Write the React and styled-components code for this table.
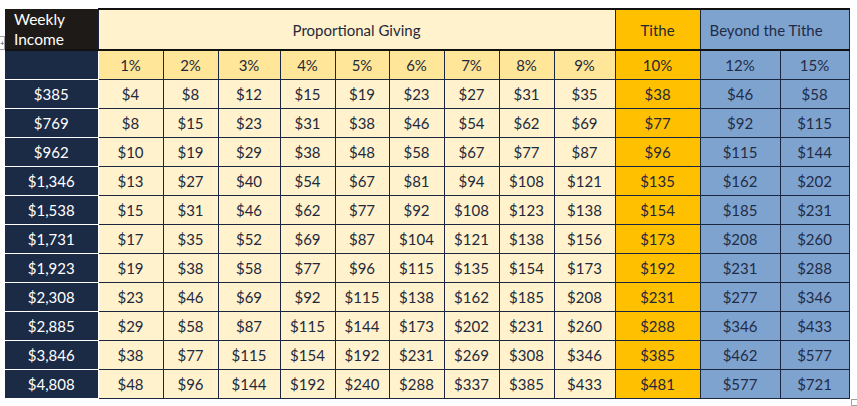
import styled, { createGlobalStyle } from "styled-components";

const GlobalStyle = createGlobalStyle`
  body {
    margin: 0;
    background: #ffffff;
    font-family: Lato, "Liberation Sans", sans-serif;
  }
`;

const Page = styled.div`
  position: relative;
  padding: 8px 0 0 5px;
  width: 857px;
  height: 406px;
  box-sizing: border-box;
`;

const Table = styled.table`
  border-collapse: collapse;
  table-layout: fixed;
  width: 844px;
  font-size: 15px;
  color: #1f293b;
`;

const HeadRow = styled.tr`
  height: 41px;
`;

const Row = styled.tr`
  height: 29px;
`;

const fills = {
  corner: "#1e1a17",
  income: "#1b2a45",
  cream: "#fff2cc",
  pct: "#ffe699",
  tithe: "#ffc000",
  blue: "#7fa3cf",
};

const Cell = styled.td`
  background: ${(p) => fills[p.$fill]};
  border: 1.5px solid #1b2740;
  text-align: ${(p) => (p.$left ? "left" : "center")};
  padding: 0 ${(p) => (p.$left ? "9px" : "0")};
  white-space: nowrap;
  ${(p) =>
    p.$fill === "income" &&
    `
    color: #ffffff;
    border-color: #ffffff;
    border-left: none;
  `}
  ${(p) =>
    p.$fill === "corner" &&
    `
    color: #ffffff;
    font-size: 15.5px;
    line-height: 20px;
    border: none;
    border-bottom: 2px solid #111111;
  `}
  ${(p) => p.$top && `border-top: 2px solid #111111; border-bottom: 2px solid #111111;`}
  ${(p) => p.$blueText && `color: #1f2c47;`}
`;

const MoveHandle = styled.div`
  position: absolute;
  left: 0;
  top: 36px;
  width: 4px;
  height: 12px;
  border: 1px solid #a0a0a0;
  border-left: none;
  background: #ffffff;
  font-size: 8px;
  line-height: 12px;
  color: #555;
  overflow: hidden;
`;

const ResizeHandle = styled.div`
  position: absolute;
  left: 851px;
  top: 399px;
  width: 7px;
  height: 7px;
  border: 1px solid #a0a0a0;
  box-sizing: border-box;
`;

const widths = [93, 65, 55, 62, 55, 54, 55, 55, 55, 61, 85, 80, 69];
const percents = [1, 2, 3, 4, 5, 6, 7, 8, 9, 10, 12, 15];

const rows = [
  ["$385", 4, 8, 12, 15, 19, 23, 27, 31, 35, 38, 46, 58],
  ["$769", 8, 15, 23, 31, 38, 46, 54, 62, 69, 77, 92, 115],
  ["$962", 10, 19, 29, 38, 48, 58, 67, 77, 87, 96, 115, 144],
  ["$1,346", 13, 27, 40, 54, 67, 81, 94, 108, 121, 135, 162, 202],
  ["$1,538", 15, 31, 46, 62, 77, 92, 108, 123, 138, 154, 185, 231],
  ["$1,731", 17, 35, 52, 69, 87, 104, 121, 138, 156, 173, 208, 260],
  ["$1,923", 19, 38, 58, 77, 96, 115, 135, 154, 173, 192, 231, 288],
  ["$2,308", 23, 46, 69, 92, 115, 138, 162, 185, 208, 231, 277, 346],
  ["$2,885", 29, 58, 87, 115, 144, 173, 202, 231, 260, 288, 346, 433],
  ["$3,846", 38, 77, 115, 154, 192, 231, 269, 308, 346, 385, 462, 577],
  ["$4,808", 48, 96, 144, 192, 240, 288, 337, 385, 433, 481, 577, 721],
];

const fillFor = (i, body) => {
  if (i === 9) return "tithe";
  if (i > 9) return "blue";
  return body ? "cream" : "pct";
};

export default function App() {
  return (
    <Page>
      <GlobalStyle />
      <MoveHandle>+</MoveHandle>
      <Table>
        <colgroup>
          {widths.map((w, i) => (
            <col key={i} style={{ width: w }} />
          ))}
        </colgroup>
        <tbody>
          <HeadRow>
            <Cell $fill="corner" $left>
              Weekly
              <br />
              Income
            </Cell>
            <Cell $fill="cream" $top colSpan={9}>
              Proportional Giving
            </Cell>
            <Cell $fill="tithe" $top>
              Tithe
            </Cell>
            <Cell $fill="blue" $top $left $blueText colSpan={2}>
              Beyond the Tithe
            </Cell>
          </HeadRow>
          <Row>
            <Cell $fill="income" style={{ borderTop: "none" }} />
            {percents.map((p, i) => (
              <Cell key={p} $fill={fillFor(i, false)} $blueText={i > 9}>
                {p}%
              </Cell>
            ))}
          </Row>
          {rows.map(([income, ...vals], r) => (
            <Row key={income}>
              <Cell
                $fill="income"
                style={r === rows.length - 1 ? { borderBottom: "none" } : undefined}
              >
                {income}
              </Cell>
              {vals.map((v, i) => (
                <Cell key={i} $fill={fillFor(i, true)} $blueText={i > 9}>
                  ${v}
                </Cell>
              ))}
            </Row>
          ))}
        </tbody>
      </Table>
      <ResizeHandle />
    </Page>
  );
}
